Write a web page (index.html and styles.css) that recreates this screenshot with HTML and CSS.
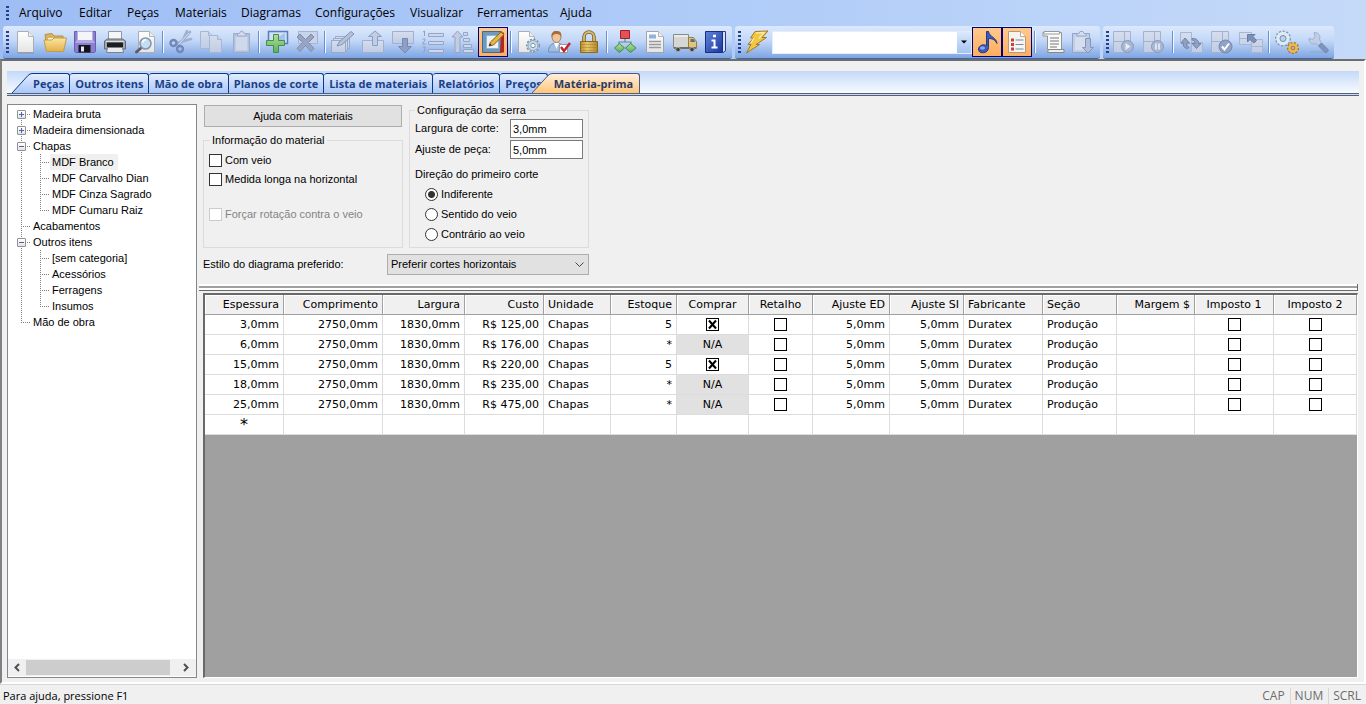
FILE: index.html
```
<!DOCTYPE html>
<html lang="pt-BR">
<head>
<meta charset="utf-8">
<title>Matéria-prima</title>
<link rel="stylesheet" href="styles.css">
</head>
<body>
<svg class="defs" width="0" height="0" aria-hidden="true">
  <defs>
    <linearGradient id="paper" x1="0" y1="0" x2="0" y2="1"><stop offset="0" stop-color="#fff"/><stop offset="1" stop-color="#e4e4e4"/></linearGradient>
    <linearGradient id="gold" x1="0" y1="0" x2="0" y2="1"><stop offset="0" stop-color="#fbe6a2"/><stop offset="1" stop-color="#e2b14a"/></linearGradient>
    <linearGradient id="brass" x1="0" y1="0" x2="1" y2="0"><stop offset="0" stop-color="#b88d2c"/><stop offset=".4" stop-color="#e8c766"/><stop offset="1" stop-color="#b1862a"/></linearGradient>
    <linearGradient id="green" x1="0" y1="0" x2="0" y2="1"><stop offset="0" stop-color="#b4dd9c"/><stop offset="1" stop-color="#5eae5a"/></linearGradient>
    <linearGradient id="blue" x1="0" y1="0" x2="1" y2="1"><stop offset="0" stop-color="#5f86dc"/><stop offset="1" stop-color="#1b36a0"/></linearGradient>
    <linearGradient id="dim" x1="0" y1="0" x2="0" y2="1"><stop offset="0" stop-color="#d6deee"/><stop offset="1" stop-color="#c0cce4"/></linearGradient>
    <linearGradient id="slope" x1="0" y1="0" x2="0" y2="1"><stop offset="0" stop-color="#e3edfd"/><stop offset="1" stop-color="#a9c8fa"/></linearGradient>
    <linearGradient id="slopeOn" x1="0" y1="0" x2="0" y2="1"><stop offset="0" stop-color="#ffeedd"/><stop offset="1" stop-color="#ffc778"/></linearGradient>
  </defs>
</svg>

<header class="top">
  <nav class="menubar" aria-label="Menu principal">
    <i class="grip"></i>
    <button type="button">Arquivo</button>
    <button type="button">Editar</button>
    <button type="button">Peças</button>
    <button type="button">Materiais</button>
    <button type="button">Diagramas</button>
    <button type="button">Configurações</button>
    <button type="button">Visualizar</button>
    <button type="button">Ferramentas</button>
    <button type="button">Ajuda</button>
  </nav>
  <div class="toolbars">
    <div class="toolbar" role="toolbar" aria-label="Padrão">
      <i class="grip"></i>
      <button type="button" class="tool" aria-label="Novo"><svg viewBox="0 0 24 24"><path d="M4.500 1.500h11l5 5v16h-16z" fill="url(#paper)" stroke="#a9adb5"/><path d="M15.500 1.500v5h5" fill="#eee" stroke="#b5b5b5"/><path d="M4 23h17" stroke="#8793aa"/></svg></button>
      <button type="button" class="tool" aria-label="Abrir"><svg viewBox="0 0 24 24"><path d="M2 4.500l7-1 2 2.500h9l1 13H4z" fill="#d9b35c" stroke="#b9923d"/><path d="M5 8h13l-1 10H5z" fill="#fff7dc"/><path d="M3.500 21.500L1 10h8l2-2h12.500l-3 13.500z" fill="url(#gold)" stroke="#c19c4a"/></svg></button>
      <button type="button" class="tool" aria-label="Salvar"><svg viewBox="0 0 24 24"><path d="M1.500 1.500h21v20l-1 1h-19l-1-1z" fill="#8b7fd0" stroke="#6a5fae"/><path d="M4.500 1.500h15v11h-15z" fill="#f4f4fa" stroke="#b8b2dc"/><path d="M2 13h20l-2-3H4z" fill="#b3a9e6"/><path d="M5.500 15h12v7.500h-12z" fill="#15151d"/><path d="M8 16.500h3v5H8z" fill="#e8e8f4"/></svg></button>
      <button type="button" class="tool" aria-label="Imprimir"><svg viewBox="0 0 24 24"><path d="M5.500 1.500h13v9h-13z" fill="#f5f6f8" stroke="#9298a3"/><path d="M1.500 11l3-2h15l3 2v8h-21z" fill="#a2a5aa" stroke="#65696f"/><path d="M3 11.500h18" stroke="#dcdee0"/><path d="M4 12.500h16v5H4z" fill="#1c1e21"/><path d="M4.500 17.500h15l1 5h-17z" fill="#e9ecef" stroke="#7b828b"/></svg></button>
      <button type="button" class="tool" aria-label="Visualizar impressão"><svg viewBox="0 0 24 24"><path d="M5.500 1.500h11l5 5v16h-16z" fill="url(#paper)" stroke="#a9adb5"/><path d="M16.500 1.500v5h5" fill="#eee" stroke="#b5b5b5"/><path d="M8 18l-4.500 4" stroke="#5d5d62" stroke-width="3" stroke-linecap="round"/><circle cx="12.500" cy="13.500" r="5.500" fill="#c3dff4" stroke="#8398ad" stroke-width="1.600"/><path d="M9.500 12.500a3.500 3.500 0 0 1 3.500-2.800" fill="none" stroke="#fff" stroke-width="1.500"/></svg></button>
      <i class="sep"></i>
      <button type="button" class="tool" aria-label="Recortar"><svg viewBox="0 0 24 24"><path d="M21 2L9.500 14.500M22 9L8 13M18 1l-5 11" stroke="#a0b0d2" stroke-width="2.600" stroke-linecap="round"/><path d="M20 3L10 14" stroke="#d5dff0"/><circle cx="4.500" cy="13" r="3" fill="none" stroke="#7288ba" stroke-width="2.400"/><circle cx="11" cy="19" r="3" fill="none" stroke="#7288ba" stroke-width="2.400"/></svg></button>
      <button type="button" class="tool" aria-label="Copiar"><svg viewBox="0 0 24 24"><g fill="url(#dim)" stroke="#a7b6d4"><path d="M1.500 1.500h8l4 4v13h-12z"/><path d="M9.500 1.500v4h4"/><path d="M10.500 5.500h8l4 4v13h-12z"/><path d="M18.500 5.500v4h4"/></g></svg></button>
      <button type="button" class="tool" aria-label="Colar"><svg viewBox="0 0 24 24"><path d="M4.500 3.500h16v19h-16z" fill="#b4c0da" stroke="#9badce"/><path d="M6.500 6.500h12v14h-12z" fill="#cfd9ec"/><path d="M8.500 6V3.500h2L12 1h1.500L15 3.500h2V6z" fill="#d6deee" stroke="#98a9cb"/></svg></button>
      <i class="sep"></i>
      <button type="button" class="tool" aria-label="Adicionar"><svg viewBox="0 0 24 24"><path d="M3.500 1.500h19v12h-19z" fill="#cfe0f8" stroke="#5a7cba" stroke-width="1.500"/><path d="M5 12L20 3v9z" fill="#a5c1ec"/><path d="M8.500 4.500h5v6h6v5h-6v7h-5v-7h-7v-5h7z" fill="url(#green)" stroke="#3f9148"/></svg></button>
      <button type="button" class="tool" aria-label="Excluir"><svg viewBox="0 0 24 24"><path d="M3.500 1.500h19v12h-19z" fill="#c9d4e9" stroke="#a5b4d1"/><path d="M2 7l3-3 5.500 5.500L16 4l3 3-5.500 5.500 5.500 6-3 3-5.500-6-5.500 6-3-3 5.500-6z" fill="#97a5c2" stroke="#7b8db2"/></svg></button>
      <i class="sep"></i>
      <button type="button" class="tool" aria-label="Editar"><svg viewBox="0 0 24 24"><g fill="url(#dim)" stroke="#99a9c8"><path d="M4.500 6.500h14v12h-14z"/><path d="M2.500 8.500h14v12h-14z"/><path d="M.500 10.500h14v12h-14z"/></g><path d="M6 16l2-4L20 1.500l3 2.500L11 14.500z" fill="#b4c1da" stroke="#8395b8"/></svg></button>
      <button type="button" class="tool" aria-label="Mover para cima"><svg viewBox="0 0 24 24"><path d="M1.500 10.500h21v12h-21z" fill="url(#dim)" stroke="#a0b0ce"/><path d="M11.500 15.500v-9h-4L14 1l6.500 5.500h-4v9z" fill="#c2cde2" stroke="#8c9dc0"/></svg></button>
      <button type="button" class="tool" aria-label="Mover para baixo"><svg viewBox="0 0 24 24"><path d="M1.500 1.500h21v12h-21z" fill="url(#dim)" stroke="#a0b0ce"/><path d="M11.500 8.500h5v8h4L14 23l-6.500-6.500h4z" fill="#8e9fc2" stroke="#7789b0"/></svg></button>
      <button type="button" class="tool" aria-label="Numerar"><svg viewBox="0 0 24 24"><g fill="#cdd8ea" stroke="#94a5c8"><path d="M7.500 3.500h15v3h-15zM7.500 11.500h15v3h-15zM7.500 19.500h15v3h-15z"/></g><path d="M2 2l1.500-1v5M1.500 9.500q3-2 2.500.500L1.500 14H5M1.500 17h3l-1.500 2q3 1-1 3.500" fill="none" stroke="#8fa0c4"/></svg></button>
      <button type="button" class="tool" aria-label="Ordenar"><svg viewBox="0 0 24 24"><path d="M4 22.500V7H1l5.500-6L12 7H9v15.500z" fill="#c2cde2" stroke="#92a3c5"/><g fill="#cdd8ea" stroke="#94a5c8"><path d="M12.500 2.500h4v3h-4zM12.500 8.500h6v3h-6zM12.500 14.500h8v3h-8zM12.500 19.500h10v3h-10z"/></g></svg></button>
      <button type="button" class="tool on" aria-label="Editor" aria-pressed="true"><svg viewBox="0 0 24 24"><path d="M1.500 1.500h19v21h-19z" fill="#6f99bd" stroke="#3e6d94"/><path d="M5.500 5.500h12v13h-12z" fill="#eaf2fb" stroke="#90b5d3"/><path d="M20 2.500h3v20h-4z" fill="#b22722"/><path d="M8 16l1.500-4L20 2l3 2.500L12.500 15z" fill="#edb33b" stroke="#866021"/><path d="M8 16l1-2.500 1.500 1.500z" fill="#222"/></svg></button>
      <i class="sep"></i>
      <button type="button" class="tool" aria-label="Opções do documento"><svg viewBox="0 0 24 24"><path d="M1.500 1.500h11l5 5v16h-16z" fill="url(#paper)" stroke="#a9adb5"/><path d="M12.500 1.500v5h5" fill="#eee" stroke="#b5b5b5"/><circle cx="16" cy="15.500" r="6.200" fill="#dce8f2" stroke="#7793ad" stroke-width="1.500" stroke-dasharray="2.200 1.400"/><circle cx="16" cy="15.500" r="5" fill="#c9dbea" stroke="#8aa5bd"/><circle cx="16" cy="15.500" r="2.200" fill="#fff" stroke="#7793ad"/></svg></button>
      <button type="button" class="tool" aria-label="Aprovar"><svg viewBox="0 0 24 24"><path d="M1.500 22c0-6 3-9 8-9s8 3 8 9z" fill="#9fbfe2" stroke="#6d8fb8"/><path d="M7 13l2.500 6 2.500-6z" fill="#fff"/><ellipse cx="9.500" cy="7" rx="4.500" ry="5.500" fill="#eec49b" stroke="#b07f55"/><path d="M4.500 7C4 2 7 .500 10 1c4 0 5 3 4 6-1-3-3-3-5-3-2 0-3 1-4.500 3z" fill="#a96c37"/><path d="M12.500 14.500h8v8h-8z" fill="#fff" stroke="#9a9a9a"/><path d="M14 17l3 4 6-8" fill="none" stroke="#c4242a" stroke-width="2.400"/></svg></button>
      <button type="button" class="tool" aria-label="Bloquear"><svg viewBox="0 0 24 24"><path d="M7 12V7a5 5 0 0 1 10 0v5" fill="none" stroke="#7e6426" stroke-width="3.600"/><path d="M7 12V7a5 5 0 0 1 10 0v5" fill="none" stroke="#d8bc74" stroke-width="1.800"/><path d="M3.500 11.500h17v11h-17z" fill="url(#brass)" stroke="#8b6a20"/><path d="M4 14.500h16M4 17.500h16M4 20.500h16" stroke="#a77e27" opacity=".5"/></svg></button>
      <i class="sep"></i>
      <button type="button" class="tool" aria-label="Estrutura"><svg viewBox="0 0 24 24"><path d="M12 9v3M6 17v-5h12v5" fill="none" stroke="#5d8f86" stroke-width="1.200"/><path d="M7.500.500h9v8h-9z" fill="#e35256" stroke="#a41d27"/><path d="M6.500 13.500l5 4.500-5 4.500L1.500 18zM17.500 13.500l5.500 4.500-5.500 4.500L12.500 18z" fill="url(#green)" stroke="#3d8b4b"/></svg></button>
      <button type="button" class="tool" aria-label="Relatório"><svg viewBox="0 0 24 24"><path d="M3.500 1.500h12l5 5v16h-17z" fill="url(#paper)" stroke="#a0a5ad"/><path d="M15.500 1.500v5h5" fill="#eee" stroke="#b5b5b5"/><path d="M6 4.500h7v4H6z" fill="#8fb3dc"/><path d="M6 11.500h12M6 14.500h12M6 17.500h12" stroke="#999" stroke-width="1.300"/></svg></button>
      <button type="button" class="tool" aria-label="Entrega"><svg viewBox="0 0 24 24"><path d="M.500 4.500h15v13H.500z" fill="#d6d6d2" stroke="#8b8b86"/><path d="M1 6h14" stroke="#fff"/><path d="M15.500 7.500h5l3 4v7h-8z" fill="#e5c478" stroke="#9a7c3c"/><path d="M17.500 9h3l2 3h-5z" fill="#53718f"/><path d="M1 18h22" stroke="#6c6c68" stroke-width="2"/><circle cx="5" cy="19.500" r="2.300" fill="#444" stroke="#aaa"/><circle cx="19" cy="19.500" r="2.300" fill="#444" stroke="#aaa"/></svg></button>
      <button type="button" class="tool" aria-label="Informações"><svg viewBox="0 0 24 24"><path d="M4 1.500h18.500V21L20 22.500z" fill="#d9e3f5" stroke="#27408d"/><path d="M2.500 1.500h17v21h-17z" fill="url(#blue)" stroke="#182f80"/><path d="M10 6h3" stroke="#fff" stroke-width="2.500"/><path d="M8.500 10.500h3v6M8.500 17.500h6" stroke="#fff" stroke-width="2" fill="none"/></svg></button>
    </div>

    <div class="toolbar" role="toolbar" aria-label="Busca">
      <i class="grip"></i>
      <button type="button" class="tool" aria-label="Otimizar"><svg viewBox="0 0 24 24"><path d="M10 1.500L23 1l-6 6.500h4.500L11 14.500h3.500L1.500 23l4.500-8.500H3L8.500 8H5.500z" fill="#f3c640" stroke="#9f7a2a"/><path d="M11 3l8-.500-5 6M9 8l-3 5" fill="none" stroke="#fdeaa0" stroke-width="1.400"/></svg></button>
      <span class="combo"><input type="text" aria-label="Projeto"><button type="button" aria-label="Abrir lista"><svg viewBox="0 0 12 20"><path d="M3 8.500h6L6 11.500z"/></svg></button></span>
      <button type="button" class="tool on" aria-label="Som" aria-pressed="true"><svg viewBox="0 0 24 24"><path d="M11.500 1.500h2c.500 5 8 6 8.500 12-2-4-5-5-8.500-5v9c0 4-4 6-7.500 5s-3.500-6 1-7.500c2-.500 3.500 0 4.500.500z" fill="#3c59bb" stroke="#223a86"/><ellipse cx="7.500" cy="18" rx="2.500" ry="1.800" fill="#8ea6e6"/></svg></button>
      <button type="button" class="tool on" aria-label="Lista" aria-pressed="true"><svg viewBox="0 0 24 24"><path d="M3.500 1.500h12l5 5v16h-17z" fill="#f7f3ee" stroke="#b19a80"/><path d="M15.500 1.500v5h5" fill="#fff" stroke="#b9a995"/><path d="M10.500 10h8M10.500 14.500h8M10.500 19h8" stroke="#6e8fae" stroke-width="1.200"/><path d="M6 8.500h3v3H6zM6 13h3v3H6zM6 17.500h3v3H6z" fill="#cf3d38"/></svg></button>
      <i class="sep"></i>
      <button type="button" class="tool" aria-label="Roteiro"><svg viewBox="0 0 24 24"><path d="M4.500 2.500h16v17h-14V6h-4.500v-3.500z" fill="#fafafa" stroke="#949494"/><path d="M3 1.500h15.500v2.500H3z" fill="#fff" stroke="#999"/><path d="M7.500 19.500h15.500v3H6.500z" fill="#eee" stroke="#888"/><path d="M9 8h9M9 11h9M9 14h9M9 17h7" stroke="#777"/></svg></button>
      <button type="button" class="tool" aria-label="Importar"><svg viewBox="0 0 24 24"><path d="M1.500 3.500h17v19h-17z" fill="#c3cee4" stroke="#92a4c7"/><path d="M4 7h12v13H4z" fill="#d5deee"/><path d="M6 6V3.500h2l1-2h3l1 2h2V6z" fill="#d6deee" stroke="#98a9cb"/><path d="M14.500 8.500h5v9h3L17 23l-5.500-5.500h3z" fill="#b3c0dc" stroke="#8496bd"/></svg></button>
    </div>

    <div class="toolbar" role="toolbar" aria-label="Processamento">
      <i class="grip"></i>
      <button type="button" class="tool" aria-label="Iniciar" disabled><svg viewBox="0 0 24 24"><path d="M.500 1.500h17v21h-17z" fill="url(#dim)" stroke="#a2b2d0"/><path d="M1 11.500h16M11.500 2v20" fill="none" stroke="#a2b2d0"/><circle cx="14.500" cy="16.500" r="6" fill="#a9b7d2" stroke="#8698bc"/><path d="M12.500 13v7l5-3.500z" fill="#e8eef8"/></svg></button>
      <button type="button" class="tool" aria-label="Pausar" disabled><svg viewBox="0 0 24 24"><path d="M.500 1.500h17v21h-17z" fill="url(#dim)" stroke="#a2b2d0"/><path d="M1 11.500h16M11.500 2v20" fill="none" stroke="#a2b2d0"/><circle cx="14.500" cy="16.500" r="6" fill="#a9b7d2" stroke="#8698bc"/><path d="M13 13.500v6M16 13.500v6" stroke="#e8eef8" stroke-width="1.600"/></svg></button>
      <i class="sep"></i>
      <button type="button" class="tool" aria-label="Trocar" disabled><svg viewBox="0 0 24 24"><path d="M1.500 2.500h11v11h-11zM12.500 12.500h11v10h-11z" fill="url(#dim)" stroke="#a7b6d2"/><path d="M9 18.500C5 18 3.500 16 4.500 13H2l4-5 4.500 5H8c-.500 2 0 3.500 2 4.500zM13 8.500c4-.500 6.500 1.500 6.500 5H22l-4.500 5-4.500-5h3c0-2-1-3-3-3.500z" fill="#91a1c2" stroke="#7183aa"/></svg></button>
      <button type="button" class="tool" aria-label="Confirmar" disabled><svg viewBox="0 0 24 24"><path d="M2.500 1.500h17v21h-17z" fill="url(#dim)" stroke="#a2b2d0"/><path d="M3 11.500h16M13.500 2v20" fill="none" stroke="#a2b2d0"/><circle cx="16.500" cy="16.500" r="6.500" fill="#91a2c5" stroke="#7588b2"/><path d="M13 16.500l2.500 3 4.500-6" fill="none" stroke="#fff" stroke-width="2"/></svg></button>
      <button type="button" class="tool" aria-label="Reposicionar" disabled><svg viewBox="0 0 24 24"><path d="M.500 2.500h12v12H.500zM12.500 9.500h11v13h-11z" fill="url(#dim)" stroke="#a7b6d2"/><path d="M1 8.500h11M13 16.500h10" stroke="#a7b6d2"/><path d="M8.500 4.500H16l-2 2 3.500 4-2.500 2.500-4-3.500-2.500 2.500z" fill="#7d91b8" stroke="#677ca8"/></svg></button>
      <i class="sep"></i>
      <button type="button" class="tool" aria-label="Preferências"><svg viewBox="0 0 24 24"><circle cx="8" cy="8.500" r="7" fill="none" stroke="#7d98ae" stroke-width="2" stroke-dasharray="2 1.600"/><circle cx="8" cy="8.500" r="5" fill="none" stroke="#dcebf5" stroke-width="3.500"/><circle cx="8" cy="8.500" r="3" fill="#b9d3ee" stroke="#7690aa"/><circle cx="18" cy="18" r="5" fill="none" stroke="#a97924" stroke-width="2.200" stroke-dasharray="2 1.400"/><circle cx="18" cy="18" r="3.500" fill="none" stroke="#f2b843" stroke-width="2.600"/><circle cx="18" cy="18" r="1.800" fill="#9ebbe8" stroke="#b07b1c"/></svg></button>
      <button type="button" class="tool" aria-label="Ferramenta" disabled><svg viewBox="0 0 24 24"><path d="M5 22h17" stroke="#8ea5cf"/><path d="M9 2.500l1 4-2.500 3-3.500-1c-.500 4 3 6.500 6.500 5l3 2 3-3-2-3c1.500-4-1.500-7.500-5.500-7z" fill="#c0cde4" stroke="#9fb0cf"/><path d="M13.500 16l3-3 6.500 6.500c1 1.500-1.500 4-3 3z" fill="#7f93bd" stroke="#7186b4"/></svg></button>
    </div>
  </div>
</header>

<main class="frame">
  <div class="tabs" role="tablist">
    <svg class="slant" width="20" height="20" viewBox="0 0 20 20" aria-hidden="true"><path d="M0 20L16 2.500Q18 .500 20 .500V20z" fill="url(#slope)"/><path d="M0 20L16 2.500Q18 .500 20 .500" fill="none" stroke="#0b3a8c"/></svg>
    <button type="button" role="tab" class="tab joined">Peças</button>
    <button type="button" role="tab" class="tab">Outros itens</button>
    <button type="button" role="tab" class="tab">Mão de obra</button>
    <button type="button" role="tab" class="tab">Planos de corte</button>
    <button type="button" role="tab" class="tab">Lista de materiais</button>
    <button type="button" role="tab" class="tab">Relatórios</button>
    <button type="button" role="tab" class="tab">Preços</button>
    <svg class="slant over" width="20" height="20" viewBox="0 0 20 20" aria-hidden="true"><path d="M0 20L16 2.500Q18 .500 20 .500V20z" fill="url(#slopeOn)"/><path d="M0 20L16 2.500Q18 .500 20 .500" fill="none" stroke="#4a5a88"/></svg>
    <button type="button" role="tab" class="tab joined active" aria-selected="true">Matéria-prima</button>
  </div>

  <div class="work">
    <aside class="sidebar">
      <ul class="tree">
        <li><div class="node first"><span class="guide"><button type="button" class="expander plus" aria-label="Expandir Madeira bruta"></button></span><span class="label">Madeira bruta</span></div></li>
        <li><div class="node"><span class="guide"><button type="button" class="expander plus" aria-label="Expandir Madeira dimensionada"></button></span><span class="label">Madeira dimensionada</span></div></li>
        <li><div class="node"><span class="guide"><button type="button" class="expander" aria-label="Recolher Chapas"></button></span><span class="label">Chapas</span></div>
          <ul>
            <li><div class="node"><span class="guide"></span><span class="label selected">MDF Branco</span></div></li>
            <li><div class="node"><span class="guide"></span><span class="label">MDF Carvalho Dian</span></div></li>
            <li><div class="node"><span class="guide"></span><span class="label">MDF Cinza Sagrado</span></div></li>
            <li><div class="node last"><span class="guide"></span><span class="label">MDF Cumaru Raiz</span></div></li>
          </ul>
        </li>
        <li><div class="node"><span class="guide"></span><span class="label">Acabamentos</span></div></li>
        <li><div class="node"><span class="guide"><button type="button" class="expander" aria-label="Recolher Outros itens"></button></span><span class="label">Outros itens</span></div>
          <ul>
            <li><div class="node"><span class="guide"></span><span class="label">[sem categoria]</span></div></li>
            <li><div class="node"><span class="guide"></span><span class="label">Acessórios</span></div></li>
            <li><div class="node"><span class="guide"></span><span class="label">Ferragens</span></div></li>
            <li><div class="node last"><span class="guide"></span><span class="label">Insumos</span></div></li>
          </ul>
        </li>
        <li><div class="node last"><span class="guide"></span><span class="label">Mão de obra</span></div></li>
      </ul>
      <div class="scrollbar">
        <button type="button" aria-label="Rolar à esquerda"><svg width="17" height="17" viewBox="0 0 17 17"><path d="M11 5L7.500 8.500L11 12" fill="none" stroke="#505050" stroke-width="2"/></svg></button>
        <span class="thumb"></span>
        <button type="button" aria-label="Rolar à direita"><svg width="17" height="17" viewBox="0 0 17 17"><path d="M6 5l3.500 3.500L6 12" fill="none" stroke="#505050" stroke-width="2"/></svg></button>
      </div>
    </aside>

    <section class="content">
      <form class="settings">
        <div class="groups">
          <div class="col">
            <button type="button" class="help">Ajuda com materiais</button>
            <fieldset class="info">
              <legend>Informação do material</legend>
              <label class="check"><input type="checkbox">Com veio</label>
              <label class="check"><input type="checkbox">Medida longa na horizontal</label>
              <label class="check spaced off"><input type="checkbox" disabled>Forçar rotação contra o veio</label>
            </fieldset>
          </div>
          <fieldset class="saw">
            <legend>Configuração da serra</legend>
            <div class="field"><label for="kerf">Largura de corte:</label><input id="kerf" type="text" value="3,0mm"></div>
            <div class="field"><label for="trim">Ajuste de peça:</label><input id="trim" type="text" value="5,0mm"></div>
            <p class="caption">Direção do primeiro corte</p>
            <label class="radio"><input type="radio" name="dir" checked>Indiferente</label>
            <label class="radio"><input type="radio" name="dir">Sentido do veio</label>
            <label class="radio"><input type="radio" name="dir">Contrário ao veio</label>
          </fieldset>
        </div>
        <div class="style-row">
          <label for="style">Estilo do diagrama preferido:</label>
          <select id="style"><option>Preferir cortes horizontais</option></select>
        </div>
      </form>
      <div class="splitter"></div>
      <div class="grid">
        <table>
          <colgroup><col style="width:79px"><col style="width:99px"><col style="width:82px"><col style="width:79px"><col style="width:67px"><col style="width:66px"><col style="width:72px"><col style="width:64px"><col style="width:77px"><col style="width:74px"><col style="width:79px"><col style="width:74px"><col style="width:78px"><col style="width:79px"><col style="width:83px"></colgroup>
          <thead>
            <tr><th class="r">Espessura</th><th class="r">Comprimento</th><th class="r">Largura</th><th class="r">Custo</th><th>Unidade</th><th class="r">Estoque</th><th class="c">Comprar</th><th class="c">Retalho</th><th class="r">Ajuste ED</th><th class="r">Ajuste SI</th><th>Fabricante</th><th>Seção</th><th class="r">Margem $</th><th class="c">Imposto 1</th><th class="c">Imposto 2</th></tr>
          </thead>
          <tbody>
            <tr><td class="r">3,0mm</td><td class="r">2750,0mm</td><td class="r">1830,0mm</td><td class="r">R$ 125,00</td><td>Chapas</td><td class="r">5</td><td class="c"><input type="checkbox" aria-label="Comprar" checked></td><td class="c"><input type="checkbox" aria-label="Retalho"></td><td class="r">5,0mm</td><td class="r">5,0mm</td><td>Duratex</td><td>Produção</td><td></td><td class="c"><input type="checkbox" aria-label="Imposto 1"></td><td class="c"><input type="checkbox" aria-label="Imposto 2"></td></tr>
            <tr><td class="r">6,0mm</td><td class="r">2750,0mm</td><td class="r">1830,0mm</td><td class="r">R$ 176,00</td><td>Chapas</td><td class="r">*</td><td class="c na">N/A</td><td class="c"><input type="checkbox" aria-label="Retalho"></td><td class="r">5,0mm</td><td class="r">5,0mm</td><td>Duratex</td><td>Produção</td><td></td><td class="c"><input type="checkbox" aria-label="Imposto 1"></td><td class="c"><input type="checkbox" aria-label="Imposto 2"></td></tr>
            <tr><td class="r">15,0mm</td><td class="r">2750,0mm</td><td class="r">1830,0mm</td><td class="r">R$ 220,00</td><td>Chapas</td><td class="r">5</td><td class="c"><input type="checkbox" aria-label="Comprar" checked></td><td class="c"><input type="checkbox" aria-label="Retalho"></td><td class="r">5,0mm</td><td class="r">5,0mm</td><td>Duratex</td><td>Produção</td><td></td><td class="c"><input type="checkbox" aria-label="Imposto 1"></td><td class="c"><input type="checkbox" aria-label="Imposto 2"></td></tr>
            <tr><td class="r">18,0mm</td><td class="r">2750,0mm</td><td class="r">1830,0mm</td><td class="r">R$ 235,00</td><td>Chapas</td><td class="r">*</td><td class="c na">N/A</td><td class="c"><input type="checkbox" aria-label="Retalho"></td><td class="r">5,0mm</td><td class="r">5,0mm</td><td>Duratex</td><td>Produção</td><td></td><td class="c"><input type="checkbox" aria-label="Imposto 1"></td><td class="c"><input type="checkbox" aria-label="Imposto 2"></td></tr>
            <tr><td class="r">25,0mm</td><td class="r">2750,0mm</td><td class="r">1830,0mm</td><td class="r">R$ 475,00</td><td>Chapas</td><td class="r">*</td><td class="c na">N/A</td><td class="c"><input type="checkbox" aria-label="Retalho"></td><td class="r">5,0mm</td><td class="r">5,0mm</td><td>Duratex</td><td>Produção</td><td></td><td class="c"><input type="checkbox" aria-label="Imposto 1"></td><td class="c"><input type="checkbox" aria-label="Imposto 2"></td></tr>
            <tr><td class="c new">*</td><td></td><td></td><td></td><td></td><td></td><td></td><td></td><td></td><td></td><td></td><td></td><td></td><td></td><td></td></tr>
          </tbody>
        </table>
      </div>
    </section>
  </div>
</main>

<footer class="status">
  <span class="hint">Para ajuda, pressione F1</span>
  <span class="key">CAP</span>
  <span class="key">NUM</span>
  <span class="key">SCRL</span>
</footer>
</body>
</html>
```
FILE: styles.css
```
* { box-sizing: border-box; }

body {
  margin: 0;
  min-height: 100vh;
  display: flex;
  flex-direction: column;
  background: #f0f0f0;
  color: #000;
  font: 11px/13px "Liberation Sans", Arial, sans-serif;
}

button, input, select { font: inherit; color: inherit; margin: 0; }

svg { flex: none; }
.defs { display: block; width: 0; height: 0; }

/* Menu and toolbars */
.top { background: linear-gradient(90deg, #9ebdf5, #b0ccf8 55%, #c5daf9); }

.menubar {
  display: grid;
  grid-template-columns: 13px 60px 48px 48px 66px 74px 95px 67px 83px 60px;
  height: 26px;
  padding-left: 6px;
  align-items: center;
}

.menubar button {
  padding: 0;
  border: 0;
  background: none;
  text-align: left;
  white-space: nowrap;
  font: 12px/18px "Open Sans", "Segoe UI", sans-serif;
}

.grip {
  width: 3px;
  height: 23px;
  background: linear-gradient(#27408b 50%, transparent 0) 0 0 / 2px 4px;
}

.menubar .grip { height: 15px; }

.toolbars { display: flex; flex-wrap: wrap; padding-left: 3px; gap: 3px; }

.toolbar {
  display: flex;
  align-items: center;
  height: 33px;
  padding: 0 2px 0 3px;
  border-radius: 3px;
  border-bottom: 1px solid #3f66a8;
  background: linear-gradient(#dce9fc, #c3d8f8 45%, #7ea5e2);
}

.toolbar .grip { margin-right: 1px; }

.tool {
  display: flex;
  align-items: center;
  justify-content: center;
  width: 30px;
  height: 30px;
  padding: 0;
  border: 1px solid transparent;
  background: none;
}

.tool svg { width: 24px; height: 24px; }
.tool.on { border-color: #000080; background: linear-gradient(#ffc98c, #ffae5e); }

.sep {
  width: 2px;
  height: 22px;
  margin: 0 2px;
  background: linear-gradient(90deg, #6a8fcf 50%, #f4f8ff 0);
}

.combo { display: flex; width: 200px; height: 23px; padding: 1px; background: #e2edfd; }
.combo input { flex: 1; min-width: 0; border: 0; padding: 0 3px; background: #fff; }
.combo button { width: 14px; padding: 0 1px; border: 0; background: linear-gradient(#dbe9fd, #a4c3f1); }

/* Tabs */
.frame {
  flex: 1;
  display: flex;
  flex-direction: column;
  padding: 10px 5px 4px;
  border: 2px solid #6d6d6d;
  border-left-color: #808080;
  border-right-color: #fff;
  border-bottom-color: #fff;
}

.tabs {
  display: flex;
  align-items: flex-end;
  height: 25px;
  padding-left: 5px;
  border-bottom: 3px double #555f78;
  background: linear-gradient(#c3d9f9, #f8fbff);
}

.tab {
  height: 20px;
  padding: 0 5px;
  border: solid #0b3a8c;
  border-width: 1px 1px 0 0;
  border-radius: 3px 3px 0 0;
  background: linear-gradient(#e3edfd, #a9c8fa);
  color: #1b3f87;
  font: bold 11px/18px "Open Sans", "Segoe UI", sans-serif;
  white-space: nowrap;
}

.tab.joined { padding-left: 1px; border-radius: 0 3px 0 0; }
.tab.active {
  padding: 0 6px 0 2px;
  border-color: #4a5a88;
  background: linear-gradient(#ffeedd, #ffc778);
  color: #2c3a66;
}
.slant { display: block; }
.slant.over { margin-left: -16px; z-index: 1; }

/* Body */
.work { flex: 1; display: flex; margin-top: 8px; gap: 2px; }

.sidebar {
  flex: none;
  width: 190px;
  display: flex;
  flex-direction: column;
  justify-content: space-between;
  border: 1px solid #828790;
  background: #fff;
}

.tree, .tree ul { margin: 0; padding: 0; list-style: none; }
.tree { padding: 1px 0 0 5px; }
.tree ul {
  padding-left: 19px;
  background: linear-gradient(#808080 50%, transparent 0) 8px 0 / 1px 2px repeat-y;
}

.node { display: flex; height: 16px; }

.guide {
  width: 18px;
  padding-top: 4px;
  border-left: 8px solid transparent;
  background:
    linear-gradient(#808080 50%, transparent 0) 0 0 / 1px 2px repeat-y,
    linear-gradient(90deg, #808080 50%, transparent 0) 0 8px / 2px 1px repeat-x;
  background-clip: padding-box;
}

.guide:has(.expander) { border-left-width: 4px; background-position: 4px 0, 4px 8px; clip-path: inset(0); }
.node.first .guide { clip-path: inset(4px 0 0); }
.node.last .guide { clip-path: inset(0 0 7px); }

.label { padding: 1px 4px 0 2px; line-height: 15px; white-space: nowrap; }
.selected { background: #f0f0f0; }

.expander {
  display: block;
  width: 9px;
  height: 9px;
  padding: 0;
  border: 1px solid #919191;
  border-radius: 1px;
  background: linear-gradient(#4b63a7, #4b63a7) 1px 3px / 5px 1px no-repeat, linear-gradient(#fff, #e4e4e4);
}

.expander.plus {
  background:
    linear-gradient(#4b63a7, #4b63a7) 1px 3px / 5px 1px no-repeat,
    linear-gradient(#4b63a7, #4b63a7) 3px 1px / 1px 5px no-repeat,
    linear-gradient(#fff, #e4e4e4);
}

.scrollbar { display: flex; height: 17px; margin-bottom: 1px; background: #f0f0f0; }
.scrollbar button { width: 18px; padding: 0; border: 0; background: none; }
.scrollbar .thumb { flex: none; width: 144px; height: 15px; margin: 1px auto 0 0; background: #cdcdcd; }
.scrollbar svg { display: block; }

.content { flex: 1; min-width: 0; display: flex; flex-direction: column; margin-right: 1px; }

.settings { padding-left: 4px; }
.groups { display: grid; grid-template-columns: 200px 180px; gap: 6px; }
.col { display: flex; flex-direction: column; gap: 7px; padding-top: 1px; }

.help {
  height: 22px;
  margin: 0 1px;
  padding: 0;
  border: 1px solid #adadad;
  background: #e1e1e1;
}

fieldset { min-width: 0; margin: 0; border: 1px solid #dcdcdc; }
legend { padding: 0 2px; }
.info { flex: 1; padding: 4px 5px 0; }
.info legend { margin-left: 1px; }
.saw { padding: 1px 5px 3px; }

.check, .radio { display: flex; align-items: center; gap: 3px; height: 19px; }
.check.spaced { margin-top: 16px; }
.off { color: #838383; }
.radio { height: 20px; padding-left: 10px; }

.check input, .radio input, .grid input {
  appearance: none;
  display: block;
  width: 13px;
  height: 13px;
  border: 1px solid #333;
  background: #fff;
}

.check input:disabled { border-color: #ccc; }
.radio input { border-radius: 50%; }
.radio input:checked { background: radial-gradient(circle, #333 3px, #fff 4px); }

.field { display: flex; align-items: center; justify-content: space-between; height: 21px; }
.field input { width: 73px; height: 19px; padding: 1px 2px; border: 1px solid #7a7a7a; background: #fff; }
.caption { margin: 4px 0 0; line-height: 20px; }

.style-row { display: flex; align-items: center; justify-content: space-between; width: 386px; height: 21px; margin-top: 6px; }
.style-row select {
  appearance: none;
  width: 202px;
  height: 21px;
  padding: 0 3px;
  border: 1px solid #adadad;
  background: #e1e1e1 url("data:image/svg+xml,%3Csvg xmlns='http://www.w3.org/2000/svg' width='9' height='6'%3E%3Cpath d='M.5 .5l4 4 4-4' fill='none' stroke='%23444'/%3E%3C/svg%3E") right 4px center no-repeat;
}

.splitter {
  height: 7px;
  margin-top: 9px;
  border-right: 1px solid #696969;
  background: linear-gradient(#fff 2px, #a0a0a0 2px 4px, #fff 4px 6px, #696969 6px);
}

/* Material grid */
.grid {
  flex: 1;
  margin: 2px 0 0 4px;
  border: 2px solid #696969;
  border-right: 1px solid #fff;
  border-bottom: 1px solid #fff;
  background: #a0a0a0;
}

.grid table {
  width: 100%;
  table-layout: fixed;
  border-collapse: separate;
  border-spacing: 0;
  background: #fff;
  font: 11px/13px "DejaVu Sans", Verdana, sans-serif;
}

.grid th, .grid td {
  height: 20px;
  padding: 0 4px;
  border: solid #dcdcdc;
  border-width: 0 1px 1px 0;
  text-align: left;
  font-weight: normal;
  white-space: nowrap;
}

.grid th { border-color: #a0a0a0; background: #f0f0f0; box-shadow: inset 1px 1px #fff; }
.grid .r { text-align: right; }
.grid .c { text-align: center; }
.grid td.na { background: #e1e1e1; }
.grid td.new { font-size: 16px; }
.grid input { margin: 0 auto; border-color: #000; }
.grid input:checked {
  background: #fff url("data:image/svg+xml,%3Csvg xmlns='http://www.w3.org/2000/svg' width='11' height='11'%3E%3Cpath d='M2 1.500l7 8M9 1.500l-7 8' stroke='%23000' stroke-width='2'/%3E%3C/svg%3E");
}

/* Status bar */
.status {
  display: flex;
  align-items: center;
  height: 20px;
  padding: 2px 0 0 3px;
  border-top: 1px solid #d7d7d7;
  font: 12px/16px "Open Sans", "Segoe UI", sans-serif;
}

.hint { margin-right: auto; font-size: 11px; }
.key { padding: 0 5px 0 4px; border-left: 1px solid #d7d7d7; color: #6d6d6d; }
.hint + .key { border-left: 0; }
```
